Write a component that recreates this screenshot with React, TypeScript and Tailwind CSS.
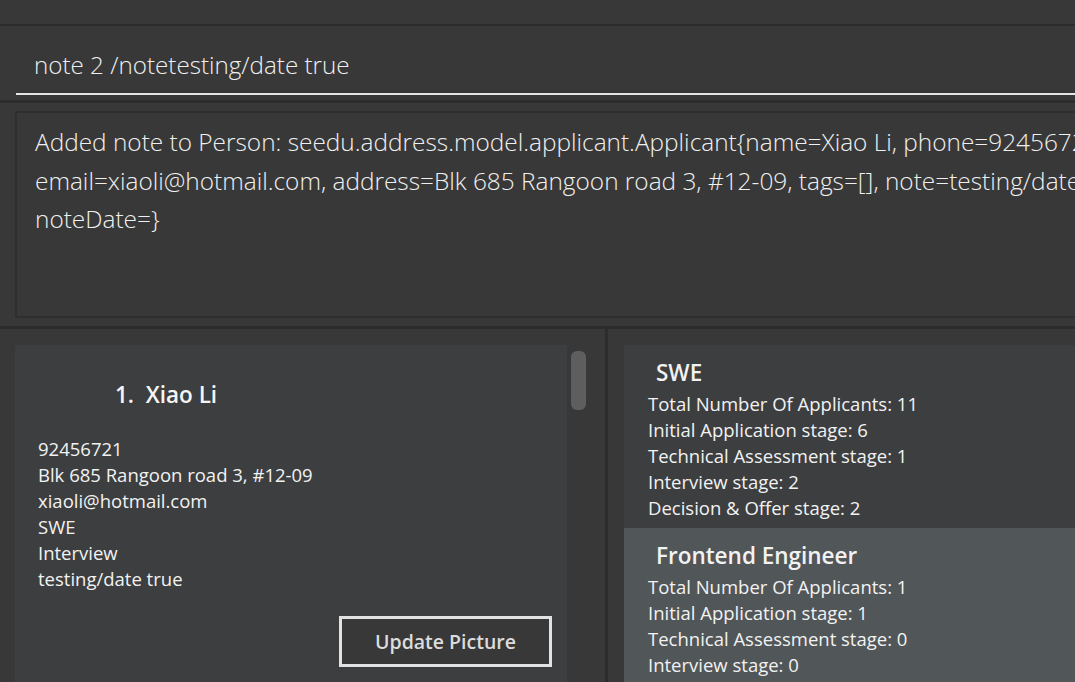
import { ReactElement } from "react"

type StageCount = {
    role: string,
    total: number,
    initial: number,
    technical: number,
    interview: number,
    decision: number,
}

const stats: StageCount[] = [
    { role: "SWE", total: 11, initial: 6, technical: 1, interview: 2, decision: 2 },
    { role: "Frontend Engineer", total: 1, initial: 1, technical: 0, interview: 0, decision: 0 },
]

const details: string[] = [
    "92456721",
    "Blk 685 Rangoon road 3, #12-09",
    "xiaoli@hotmail.com",
    "SWE",
    "Interview",
    "testing/date true",
]

const font = { fontFamily: "'Open Sans', 'Noto Sans', sans-serif" }

const StatCard = ({ stat, odd }: { stat: StageCount, odd: boolean }) => {
    return (
        <div className={`${odd ? "bg-[#515658]" : "bg-[#3c3e40]"} pl-[24px] pt-[10px] pb-[7px] text-[#f2f2f2]`}>
            <div className="pl-[8px] text-[22.5px] font-semibold leading-[36px] whitespace-nowrap">{stat.role}</div>
            <div className="text-[18.5px] leading-[26px] whitespace-nowrap">
                <div>Total Number Of Applicants: {stat.total}</div>
                <div>Initial Application stage: {stat.initial}</div>
                <div>Technical Assessment stage: {stat.technical}</div>
                <div>Interview stage: {stat.interview}</div>
                <div>Decision &amp; Offer stage: {stat.decision}</div>
            </div>
        </div>
    )
}

export default function App(): ReactElement {
    return (
        <div style={font} className="w-[1075px] h-[682px] overflow-hidden bg-[#383838] flex flex-col text-white">
            <div className="h-[26px] shrink-0 border-b-2 border-[#2c2c2c]" />

            <section className="h-[74px] shrink-0 pl-[16px] pt-[23px]">
                <div className="border-b-2 border-[#e6e6e6] h-[46px] pl-[18px] text-[24.2px] font-light text-[#f0f0f0] whitespace-nowrap leading-[32px]">
                    note 2 /notetesting/date true
                </div>
            </section>

            <div className="h-[3px] shrink-0 bg-[#2c2c2c]" />

            <section className="h-[223px] shrink-0 pl-[15px] pt-[8px] pb-[8px]">
                <div className="h-full border-2 border-r-0 border-[#2e2e2e] pl-[18px] pt-[10px] text-[24.4px] font-light text-[#f0f0f0] leading-[38.5px] whitespace-nowrap overflow-hidden">
                    <div>Added note to Person: seedu.address.model.applicant.Applicant{"{"}name=Xiao Li, phone=92456721,</div>
                    <div>email=xiaoli@hotmail.com, address=Blk 685 Rangoon road 3, #12-09, tags=[], note=testing/date true,</div>
                    <div>noteDate={"}"}</div>
                </div>
            </section>

            <div className="h-[3px] shrink-0 bg-[#2c2c2c]" />

            <div className="flex-1 flex min-h-0">
                <section className="w-[605px] shrink-0 flex pt-[16px] pl-[15px]">
                    <div className="w-[552px] bg-[#3c3e40] pt-[35px]">
                        <div className="pl-[100px] text-[22.5px] font-semibold text-[#f5f5f5] leading-[30px] whitespace-nowrap">
                            1.&nbsp;&nbsp;Xiao Li
                        </div>
                        <div className="pl-[23px] pt-[26px] text-[18.5px] leading-[26px] text-[#f2f2f2] whitespace-nowrap">
                            {details.map(line => <div key={line}>{line}</div>)}
                        </div>
                        <div className="flex justify-end pr-[15px] pt-[24px]">
                            <button className="w-[213px] h-[51px] border-[3px] border-[#e2e2e2] bg-[#383838] text-[19.5px] font-semibold text-[#dcdcdc]">
                                Update Picture
                            </button>
                        </div>
                    </div>
                    <div className="w-[23px] pt-[6px] flex justify-center">
                        <div className="w-[15px] h-[59px] rounded-[6px] bg-[#5e5e5e]" />
                    </div>
                </section>

                <div className="w-[3px] shrink-0 bg-[#2c2c2c]" />

                <section className="flex-1 pt-[16px] pl-[16px] min-w-0 overflow-hidden">
                    {stats.map((s, i) => <StatCard key={s.role} stat={s} odd={i % 2 === 1} />)}
                </section>
            </div>
        </div>
    )
}
